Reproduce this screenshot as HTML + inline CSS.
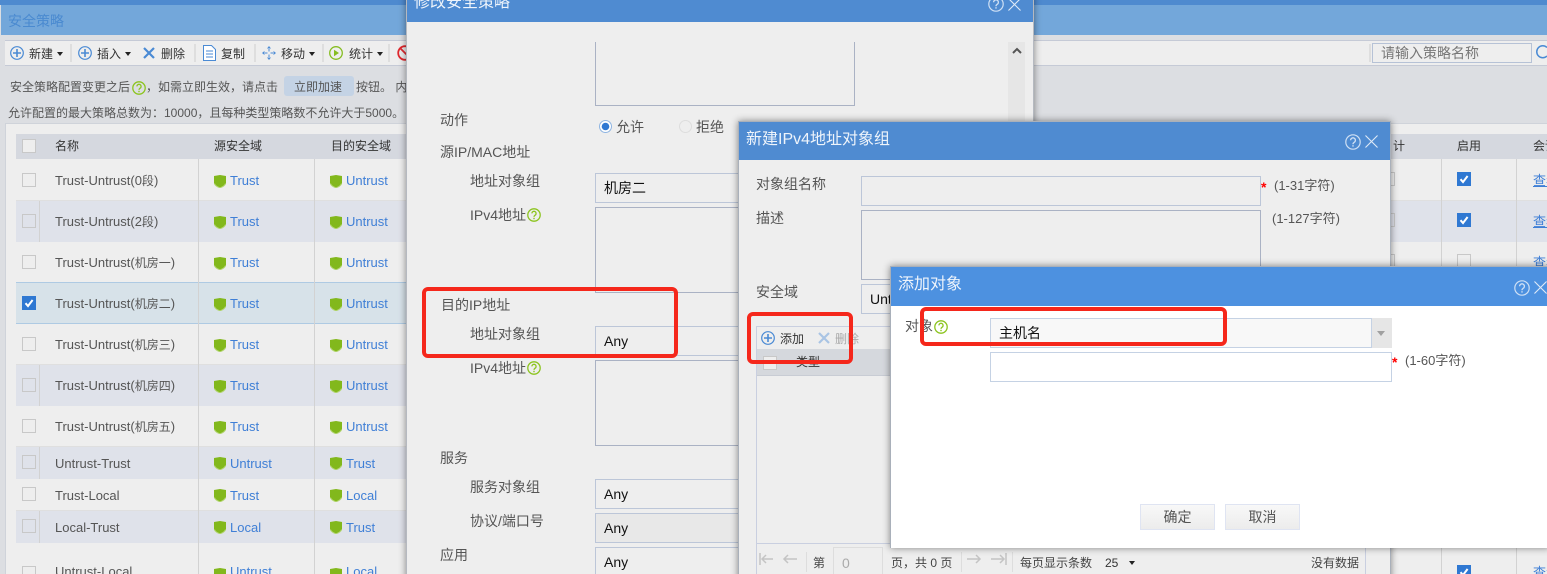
<!DOCTYPE html>
<html lang="zh"><head><meta charset="utf-8"><title>安全策略</title>
<style>
html,body{margin:0;padding:0;width:1547px;height:574px;overflow:hidden;background:#dcdee2}
body{position:relative;font:13px/20px "Liberation Sans","Noto Sans CJK SC",sans-serif;color:#555}
body *{box-sizing:border-box}
.t{position:absolute;white-space:nowrap;height:20px;margin-top:1px}
.f12{font-size:12px}
.f14{font-size:14px}
.c{font-size:12px}
.b{position:absolute}
.k{color:#111}
.h{color:#333;font-size:12px}
.l{color:#3f7fd6}
.cb{position:absolute;width:14px;height:14px;border:1px solid #c8c8c8;background:#eee}
.ck{position:absolute;width:14px;height:14px;background:#2f78d2}
.ck svg{display:block}
.in{position:absolute;border:1px solid #bcc6d8;background:#eee;height:30px}
.ta{position:absolute;border:1px solid #aab2c4;background:#eee}
.row{position:absolute;left:16px;width:1531px}
.a{background:#dfe2ea}
.n{background:#eee;border-bottom:1px solid #dfdfdf}
.s{background:#d7e2e9;border-top:1px solid #aecae3;border-bottom:1px solid #aecae3}
.dv{position:absolute;width:1px;background:#d2d2d2}
.tb{position:absolute;width:2px;height:18px;top:44px;background:#dedede}
.car{position:absolute;width:0;height:0;border-left:3px solid transparent;border-right:3px solid transparent;border-top:4px solid #222}
.dlg{position:absolute;box-shadow:0 0 7px rgba(0,0,0,.45)}
.hd{position:absolute;color:#eef4fb;font-size:16px;white-space:nowrap;height:20px;margin-top:1px}
.red{position:absolute;border:4px solid #f5271b;border-radius:6px}
.btn{position:absolute;top:504px;width:75px;height:26px;border:1px solid #dfe4f2;background:linear-gradient(#f8f8f8,#ececec);text-align:center;line-height:25px;color:#555;font-size:14px}
svg{position:absolute;overflow:visible}
</style></head><body>
<svg width="0" height="0" style="position:absolute"><defs>
<symbol id="sh" viewBox="0 0 12 13"><path d="M0 1 6 0l6 1v7c0 2-3 4-6 5-3-1-6-3-6-5z" fill="#82b81c"/><path d="M.5 8.500C1 10.500 3.500 12 6 12.800 8.500 12 11 10.500 11.500 8.500" fill="none" stroke="#b5d676" stroke-width="1"/></symbol>
<symbol id="q" viewBox="0 0 14 14"><circle cx="7" cy="7" r="6.2" fill="none" stroke="#8cc41f" stroke-width="1.3"/><path d="M4.9 5.4a2.1 2.1 0 1 1 3.2 1.8c-.8.5-1.1.9-1.1 1.7" fill="none" stroke="#8cc41f" stroke-width="1.3"/><rect x="6.3" y="9.8" width="1.4" height="1.4" fill="#8cc41f"/></symbol>
<symbol id="hq" viewBox="0 0 16 16"><circle cx="8" cy="8" r="7.2" fill="none" stroke="#cfe0f4" stroke-width="1.2"/><path d="M5.6 6.2a2.4 2.4 0 1 1 3.6 2.1c-.8.5-1.2 1-1.2 1.9" fill="none" stroke="#cfe0f4" stroke-width="1.3"/><rect x="7.3" y="11.2" width="1.4" height="1.4" fill="#cfe0f4"/></symbol>
<symbol id="hx" viewBox="0 0 14 14"><path d="M.5.5l13 13M13.5.5l-13 13" stroke="#dfeaf7" stroke-width="1.2" fill="none"/></symbol>
<symbol id="pl" viewBox="0 0 14 14"><circle cx="7" cy="7" r="6.3" fill="none" stroke="#4a8ad4" stroke-width="1.2"/><path d="M7 3v8M3 7h8" stroke="#4a8ad4" stroke-width="1.6" fill="none"/></symbol>
<symbol id="xx" viewBox="0 0 12 12"><path d="M1 1l10 10M11 1 1 11" stroke="#4a8ad4" stroke-width="2.2" fill="none"/></symbol>
<symbol id="chk" viewBox="0 0 14 14"><path d="M3.5 7.2 6 10l4.6-6" stroke="#fff" stroke-width="2" fill="none"/></symbol>
</defs></svg>

<!-- top -->
<div class="b" style="left:0;top:0;width:1547px;height:5px;background:#4e8acf"></div>
<div class="b" style="left:1px;top:5px;width:1546px;height:30px;background:#73a7da"></div>
<div class="t f14" style="left:8px;top:10px;color:#4a8ad0">安全策略</div>
<div class="b" style="left:5px;top:40px;width:1542px;height:26px;background:#eee;border-top:1px solid #c5cad6;border-bottom:1px solid #c5cad6"></div>

<svg style="left:10px;top:46px" width="14" height="14"><use href="#pl"/></svg>
<div class="t f12" style="left:29px;top:43px;color:#333">新建</div><div class="car" style="left:57px;top:52px"></div>
<div class="tb" style="left:70px"></div>
<svg style="left:78px;top:46px" width="14" height="14"><use href="#pl"/></svg>
<div class="t f12" style="left:97px;top:43px;color:#333">插入</div><div class="car" style="left:125px;top:52px"></div>
<svg style="left:143px;top:47px" width="12" height="12"><use href="#xx"/></svg>
<div class="t f12" style="left:161px;top:43px;color:#333">删除</div>
<div class="tb" style="left:194px"></div>
<svg style="left:203px;top:45px" width="13" height="16"><path d="M.5.5h8l4 4v11H.5z" fill="#fff" stroke="#4a8ad4"/><path d="M3 6h7M3 9h7M3 12h7" stroke="#4a8ad4"/></svg>
<div class="t f12" style="left:221px;top:43px;color:#333">复制</div>
<div class="tb" style="left:254px"></div>
<svg style="left:262px;top:46px" width="14" height="14"><path d="M7 0 5 2.500h4zM7 14l-2-2.500h4zM0 7l2.500-2v4zM14 7l-2.500-2v4z" fill="#4a8ad4"/><path d="M7 3v2.500M7 8.500V11M3 7h2.500M8.500 7H11" stroke="#4a8ad4"/></svg>
<div class="t f12" style="left:281px;top:43px;color:#333">移动</div><div class="car" style="left:309px;top:52px"></div>
<div class="tb" style="left:322px"></div>
<svg style="left:329px;top:46px" width="14" height="14"><circle cx="7" cy="7" r="6.300" fill="none" stroke="#86bd22" stroke-width="1.300"/><path d="M5 3.700 10 7l-5 3.300z" fill="#86bd22"/></svg>
<div class="t f12" style="left:349px;top:43px;color:#333">统计</div><div class="car" style="left:377px;top:52px"></div>
<div class="tb" style="left:388px"></div>
<svg style="left:397px;top:45px" width="16" height="16"><circle cx="8" cy="8" r="6.800" fill="none" stroke="#e0282e" stroke-width="1.800"/><path d="M3 3l10 10" stroke="#e0282e" stroke-width="1.800"/></svg>

<div class="tb" style="left:1369px"></div>
<div class="b" style="left:1372px;top:43px;width:160px;height:20px;border:1px solid #b6c2d6;background:#eee"></div>
<div class="t f14" style="left:1381px;top:42px;color:#777">请输入策略名称</div>
<svg style="left:1537px;top:45px" width="12" height="14"><path d="M10 2.500A6 6 0 1 0 10 11" fill="none" stroke="#4a8ad4" stroke-width="1.500"/></svg>

<div class="t f12" style="left:10px;top:76px">安全策略配置变更之后</div>
<svg style="left:132px;top:81px" width="14" height="14"><use href="#q"/></svg>
<div class="t f12" style="left:146px;top:76px">，如需立即生效，请点击</div>
<div class="b" style="left:284px;top:76px;width:70px;height:20px;background:#c4d3e5;border-radius:3px"></div>
<div class="t f12" style="left:294px;top:76px">立即加速</div>
<div class="t f12" style="left:356px;top:76px">按钮。 内</div>
<div class="t f12" style="left:8px;top:102px">允许配置的最大策略总数为：10000，且每种类型策略数不允许大于5000。</div>

<!-- table -->
<div class="b" style="left:5px;top:123px;width:1542px;height:451px;background:#eee;border-top:1px solid #cfd3da;border-left:1px solid #cfd3da"></div>
<div class="row" style="top:134px;height:25px;background:#d5d8df"></div>
<div class="row n" style="top:159px;height:42px"></div>
<div class="row a" style="top:201px;height:41px"></div>
<div class="row n" style="top:242px;height:41px"></div>
<div class="row s" style="top:282px;height:42px"></div>
<div class="row n" style="top:324px;height:41px"></div>
<div class="row a" style="top:365px;height:41px"></div>
<div class="row n" style="top:406px;height:41px"></div>
<div class="row a" style="top:447px;height:32px"></div>
<div class="row n" style="top:479px;height:32px"></div>
<div class="row a" style="top:511px;height:32px"></div>
<div class="row" style="top:543px;height:31px;background:#eee"></div>
<div class="dv" style="left:198px;top:159px;height:415px"></div>
<div class="dv" style="left:314px;top:159px;height:415px"></div>
<div class="dv" style="left:1441px;top:159px;height:415px"></div>
<div class="dv" style="left:1516px;top:159px;height:415px"></div>
<div class="dv" style="left:39px;top:201px;height:41px"></div>
<div class="dv" style="left:39px;top:365px;height:41px"></div>
<div class="dv" style="left:39px;top:447px;height:32px"></div>
<div class="dv" style="left:39px;top:511px;height:32px"></div>

<div class="cb" style="left:22px;top:139px"></div>
<div class="t h" style="left:55px;top:135px">名称</div><div class="t h" style="left:214px;top:135px">源安全域</div><div class="t h" style="left:331px;top:135px">目的安全域</div>
<div class="t h" style="left:1393px;top:135px">计</div><div class="t h" style="left:1457px;top:135px">启用</div><div class="t h" style="left:1533px;top:135px">会话</div>

<div class="cb" style="left:22px;top:173px"></div><div class="t" style="left:55px;top:170px">Trust-Untrust(0<span class="c">段</span>)</div><svg style="left:214px;top:175px" width="12" height="13"><use href="#sh"/></svg><div class="t l" style="left:230px;top:170px">Trust</div><svg style="left:330px;top:175px" width="12" height="13"><use href="#sh"/></svg><div class="t l" style="left:346px;top:170px">Untrust</div>
<div class="cb" style="left:22px;top:214px;background:#dfe2ea"></div><div class="t" style="left:55px;top:211px">Trust-Untrust(2<span class="c">段</span>)</div><svg style="left:214px;top:216px" width="12" height="13"><use href="#sh"/></svg><div class="t l" style="left:230px;top:211px">Trust</div><svg style="left:330px;top:216px" width="12" height="13"><use href="#sh"/></svg><div class="t l" style="left:346px;top:211px">Untrust</div>
<div class="cb" style="left:22px;top:255px"></div><div class="t" style="left:55px;top:252px">Trust-Untrust(<span class="c">机房一</span>)</div><svg style="left:214px;top:257px" width="12" height="13"><use href="#sh"/></svg><div class="t l" style="left:230px;top:252px">Trust</div><svg style="left:330px;top:257px" width="12" height="13"><use href="#sh"/></svg><div class="t l" style="left:346px;top:252px">Untrust</div>
<div class="ck" style="left:22px;top:296px"><svg width="14" height="14"><use href="#chk"/></svg></div><div class="t" style="left:55px;top:293px">Trust-Untrust(<span class="c">机房二</span>)</div><svg style="left:214px;top:298px" width="12" height="13"><use href="#sh"/></svg><div class="t l" style="left:230px;top:293px">Trust</div><svg style="left:330px;top:298px" width="12" height="13"><use href="#sh"/></svg><div class="t l" style="left:346px;top:293px">Untrust</div>
<div class="cb" style="left:22px;top:337px"></div><div class="t" style="left:55px;top:334px">Trust-Untrust(<span class="c">机房三</span>)</div><svg style="left:214px;top:339px" width="12" height="13"><use href="#sh"/></svg><div class="t l" style="left:230px;top:334px">Trust</div><svg style="left:330px;top:339px" width="12" height="13"><use href="#sh"/></svg><div class="t l" style="left:346px;top:334px">Untrust</div>
<div class="cb" style="left:22px;top:378px;background:#dfe2ea"></div><div class="t" style="left:55px;top:375px">Trust-Untrust(<span class="c">机房四</span>)</div><svg style="left:214px;top:380px" width="12" height="13"><use href="#sh"/></svg><div class="t l" style="left:230px;top:375px">Trust</div><svg style="left:330px;top:380px" width="12" height="13"><use href="#sh"/></svg><div class="t l" style="left:346px;top:375px">Untrust</div>
<div class="cb" style="left:22px;top:419px"></div><div class="t" style="left:55px;top:416px">Trust-Untrust(<span class="c">机房五</span>)</div><svg style="left:214px;top:421px" width="12" height="13"><use href="#sh"/></svg><div class="t l" style="left:230px;top:416px">Trust</div><svg style="left:330px;top:421px" width="12" height="13"><use href="#sh"/></svg><div class="t l" style="left:346px;top:416px">Untrust</div>
<div class="cb" style="left:22px;top:455px;background:#dfe2ea"></div><div class="t" style="left:55px;top:453px">Untrust-Trust</div><svg style="left:214px;top:457px" width="12" height="13"><use href="#sh"/></svg><div class="t l" style="left:230px;top:453px">Untrust</div><svg style="left:330px;top:457px" width="12" height="13"><use href="#sh"/></svg><div class="t l" style="left:346px;top:453px">Trust</div>
<div class="cb" style="left:22px;top:487px"></div><div class="t" style="left:55px;top:485px">Trust-Local</div><svg style="left:214px;top:489px" width="12" height="13"><use href="#sh"/></svg><div class="t l" style="left:230px;top:485px">Trust</div><svg style="left:330px;top:489px" width="12" height="13"><use href="#sh"/></svg><div class="t l" style="left:346px;top:485px">Local</div>
<div class="cb" style="left:22px;top:519px;background:#dfe2ea"></div><div class="t" style="left:55px;top:517px">Local-Trust</div><svg style="left:214px;top:521px" width="12" height="13"><use href="#sh"/></svg><div class="t l" style="left:230px;top:517px">Local</div><svg style="left:330px;top:521px" width="12" height="13"><use href="#sh"/></svg><div class="t l" style="left:346px;top:517px">Trust</div>
<div class="cb" style="left:22px;top:566px"></div><div class="t" style="left:55px;top:561px">Untrust-Local</div><svg style="left:214px;top:568px" width="12" height="13"><use href="#sh"/></svg><div class="t l" style="left:230px;top:561px">Untrust</div><svg style="left:330px;top:568px" width="12" height="13"><use href="#sh"/></svg><div class="t l" style="left:346px;top:561px">Local</div>

<div class="cb" style="left:1381px;top:172px"></div><div class="cb" style="left:1381px;top:213px;background:#dfe2ea"></div><div class="cb" style="left:1381px;top:254px"></div>
<div class="ck" style="left:1457px;top:172px"><svg width="14" height="14"><use href="#chk"/></svg></div><div class="t l" style="left:1533px;top:170px;text-decoration:underline">查看</div>
<div class="ck" style="left:1457px;top:213px"><svg width="14" height="14"><use href="#chk"/></svg></div><div class="t l" style="left:1533px;top:211px;text-decoration:underline">查看</div>
<div class="cb" style="left:1457px;top:254px"></div><div class="t l" style="left:1533px;top:252px;text-decoration:underline">查看</div>
<div class="ck" style="left:1457px;top:565px"><svg width="14" height="14"><use href="#chk"/></svg></div><div class="t l" style="left:1533px;top:562px;text-decoration:underline">查看</div>

<!-- dialog 1 -->
<div class="dlg" style="left:406px;top:-10px;width:628px;height:600px;background:#eee;border:1px solid #b5b9c0"></div>
<div class="b" style="left:407px;top:0;width:626px;height:22px;background:#4f8bd1"></div>
<div class="hd" style="left:414px;top:-8px">修改安全策略</div>
<svg style="left:988px;top:-4px" width="16" height="16"><use href="#hq"/></svg>
<svg style="left:1008px;top:-2px" width="13" height="13"><use href="#hx"/></svg>
<div class="b" style="left:595px;top:42px;width:260px;height:64px;border:1px solid #aab2c4;border-top:none"></div>
<div class="b" style="left:1008px;top:42px;width:17px;height:90px;background:#e6e6e6"></div>
<svg style="left:1012px;top:47px" width="10" height="7"><path d="M1 6l4-4 4 4" stroke="#555" stroke-width="2" fill="none"/></svg>
<div class="t f14" style="left:440px;top:109px">动作</div>
<svg style="left:599px;top:120px" width="13" height="13"><circle cx="6.500" cy="6.500" r="6" fill="#fff" stroke="#8fb5e2"/><circle cx="6.500" cy="6.500" r="3.800" fill="#2f78d2"/></svg>
<div class="t f14" style="left:616px;top:116px">允许</div>
<svg style="left:679px;top:120px" width="13" height="13"><circle cx="6.500" cy="6.500" r="6" fill="#eee" stroke="#ddd"/></svg>
<div class="t f14" style="left:696px;top:116px">拒绝</div>
<div class="t f14" style="left:440px;top:141px">源IP/MAC地址</div>
<div class="t f14" style="left:470px;top:170px">地址对象组</div>
<div class="in" style="left:595px;top:173px;width:200px"></div><div class="t k f14" style="left:604px;top:177px">机房二</div>
<div class="t f14" style="left:470px;top:204px">IPv4地址</div>
<svg style="left:527px;top:208px" width="14" height="14"><use href="#q"/></svg>
<div class="ta" style="left:595px;top:207px;width:200px;height:86px"></div>
<div class="t f14" style="left:441px;top:294px">目的IP地址</div>
<div class="t f14" style="left:470px;top:323px">地址对象组</div>
<div class="in" style="left:595px;top:326px;width:200px"></div><div class="t k f14" style="left:604px;top:330px">Any</div>
<div class="t f14" style="left:470px;top:357px">IPv4地址</div>
<svg style="left:527px;top:361px" width="14" height="14"><use href="#q"/></svg>
<div class="ta" style="left:595px;top:360px;width:200px;height:86px"></div>
<div class="t f14" style="left:440px;top:447px">服务</div>
<div class="t f14" style="left:470px;top:476px">服务对象组</div>
<div class="in" style="left:595px;top:479px;width:200px"></div><div class="t k f14" style="left:604px;top:483px">Any</div>
<div class="t f14" style="left:470px;top:510px">协议/端口号</div>
<div class="in" style="left:595px;top:513px;width:200px;background:#e8e8e8"></div><div class="t k f14" style="left:604px;top:517px">Any</div>
<div class="t f14" style="left:440px;top:544px">应用</div>
<div class="in" style="left:595px;top:547px;width:200px"></div><div class="t k f14" style="left:604px;top:551px">Any</div>

<!-- dialog 2 -->
<div class="dlg" style="left:738px;top:121px;width:653px;height:470px;background:#eee;border:1px solid #a9b0ba"></div>
<div class="b" style="left:739px;top:122px;width:651px;height:38px;background:#4f8bd1"></div>
<div class="hd" style="left:746px;top:129px">新建IPv4地址对象组</div>
<svg style="left:1345px;top:134px" width="16" height="16"><use href="#hq"/></svg>
<svg style="left:1365px;top:135px" width="13" height="13"><use href="#hx"/></svg>
<div class="t f14" style="left:756px;top:173px">对象组名称</div>
<div class="in" style="left:861px;top:176px;width:400px"></div>
<div class="t f14" style="left:1261px;top:176px;color:#f00;font-weight:bold">*</div>
<div class="t" style="left:1274px;top:175px">(1-31字符)</div>
<div class="t f14" style="left:756px;top:207px">描述</div>
<div class="ta" style="left:861px;top:210px;width:400px;height:70px"></div>
<div class="t" style="left:1272px;top:208px">(1-127字符)</div>
<div class="t f14" style="left:756px;top:281px">安全域</div>
<div class="in" style="left:861px;top:284px;width:400px"></div>
<div class="t k f14" style="left:870px;top:288px">Untrust</div>
<div class="b" style="left:756px;top:326px;width:610px;height:260px;border:1px solid #c9cfe0"></div>
<div class="b" style="left:756px;top:543px;width:610px;height:1px;background:#c9cfe0"></div>
<svg style="left:761px;top:331px" width="14" height="14"><use href="#pl"/></svg>
<div class="t f12" style="left:780px;top:328px;color:#333">添加</div>
<svg style="left:818px;top:332px" width="12" height="12"><path d="M1 1l10 10M11 1 1 11" stroke="#a9c4e4" stroke-width="2.200" fill="none"/></svg>
<div class="t f12" style="left:835px;top:328px;color:#aaa">删除</div>
<div class="b" style="left:757px;top:349px;width:608px;height:27px;background:#d5d8dd;border-bottom:1px solid #c8ccd4"></div>
<div class="cb" style="left:763px;top:356px;background:#eee"></div>
<div class="t h" style="left:796px;top:351px">类型</div>
<svg style="left:759px;top:552px" width="260" height="14"><g stroke="#c4c4c4" stroke-width="1.500" fill="none"><path d="M1 1v12M14 7H3M7 3 3 7l4 4M38 7H25M29 3l-4 4 4 4M208 7h13M217 3l4 4-4 4M232 7h13M241 3l4 4-4 4M247 1v12"/></g></svg>
<div class="dv" style="left:806px;top:552px;height:20px;background:#ddd"></div>
<div class="t f12" style="left:813px;top:552px;color:#444">第</div>
<div class="b" style="left:833px;top:547px;width:50px;height:30px;border:1px solid #ddd;background:#eee"></div>
<div class="t f14" style="left:842px;top:552px;color:#aaa">0</div>
<div class="t f12" style="left:891px;top:552px;color:#444">页，共 0 页</div>
<div class="dv" style="left:961px;top:552px;height:20px;background:#ddd"></div>
<div class="dv" style="left:1012px;top:552px;height:20px;background:#ddd"></div>
<div class="t f12" style="left:1020px;top:552px;color:#444">每页显示条数</div>
<div class="t f12" style="left:1105px;top:552px;color:#333">25</div>
<div class="car" style="left:1129px;top:561px"></div>
<div class="t f12" style="left:1311px;top:552px;color:#444">没有数据</div>

<!-- dialog 3 -->
<div class="dlg" style="left:890px;top:266px;width:660px;height:282px;background:#fff;border-top:1px solid #a9b0ba;border-left:1px solid #a9b0ba"></div>
<div class="b" style="left:891px;top:267px;width:656px;height:39px;background:#4d91e0"></div>
<div class="hd" style="left:898px;top:274px">添加对象</div>
<svg style="left:1514px;top:280px" width="16" height="16"><use href="#hq"/></svg>
<svg style="left:1534px;top:281px" width="13" height="13"><use href="#hx"/></svg>
<div class="t f14" style="left:905px;top:315px">对象</div>
<svg style="left:934px;top:320px" width="14" height="14"><use href="#q"/></svg>
<div class="in" style="left:990px;top:318px;width:382px;background:#f8f8f8;border-color:#c5d2e4"></div>
<div class="b" style="left:1372px;top:318px;width:20px;height:30px;background:#e6e6e6"></div>
<div class="b" style="left:1377px;top:331px;width:0;height:0;border-left:4px solid transparent;border-right:4px solid transparent;border-top:5px solid #a0a0a0"></div>
<div class="t f14" style="left:999px;top:322px;color:#111">主机名</div>
<div class="in" style="left:990px;top:352px;width:402px;background:#fff;border-color:#c5d2e4"></div>
<div class="t f14" style="left:1392px;top:351px;color:#f00;font-weight:bold">*</div>
<div class="t" style="left:1405px;top:350px">(1-60字符)</div>
<div class="btn" style="left:1140px">确定</div>
<div class="btn" style="left:1225px">取消</div>

<!-- red -->
<div class="red" style="left:422px;top:287px;width:256px;height:71px"></div>
<div class="red" style="left:747px;top:312px;width:106px;height:52px"></div>
<div class="red" style="left:920px;top:307px;width:307px;height:39px"></div>
</body></html>
